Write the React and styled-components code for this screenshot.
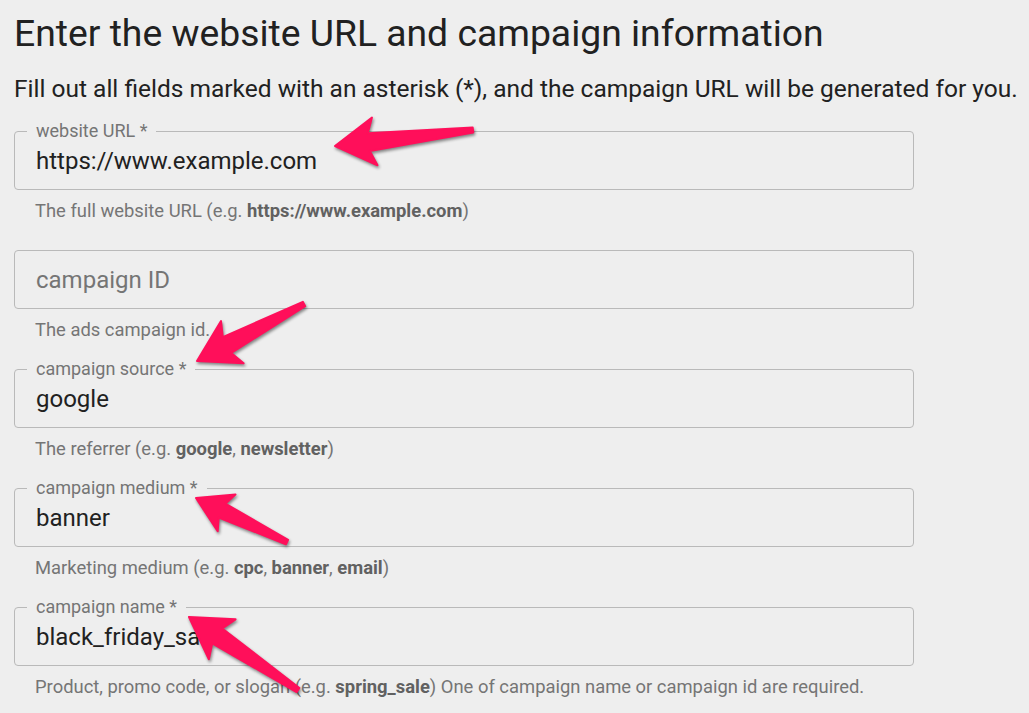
import React from "react";
import styled, { createGlobalStyle } from "styled-components";

const GlobalStyle = createGlobalStyle`
  html, body {
    margin: 0;
    padding: 0;
    background: #eeeeee;
  }
  body {
    font-family: Roboto, "Liberation Sans", Arial, sans-serif;
    color: #212121;
  }
`;

const Page = styled.div`
  position: relative;
  width: 1029px;
  height: 713px;
  overflow: hidden;
  padding: 0 14px;
  box-sizing: border-box;
`;

const Title = styled.h1`
  margin: 11px 0 0 0;
  font-size: 37.3px;
  line-height: 44px;
  font-weight: 400;
  color: #212121;
  white-space: nowrap;
`;

const Intro = styled.p`
  margin: 19px 0 0 0;
  font-size: 24.5px;
  line-height: 29px;
  color: #212121;
  white-space: nowrap;
`;

const Form = styled.div`
  display: flex;
  flex-direction: column;
  margin-top: 19px;
`;

const Field = styled.div`
  display: flex;
  flex-direction: column;
  margin-bottom: 19px;
`;

const Outline = styled.fieldset`
  margin: 0;
  padding: 0 12px;
  width: 900px;
  box-sizing: border-box;
  min-inline-size: 0;
  border: 1px solid #b9b9b9;
  border-radius: 4px;
`;

const Legend = styled.legend`
  padding: ${(p) => (p.$hidden ? "0" : "0 9px")};
  max-width: ${(p) => (p.$hidden ? "0.01px" : "none")};
  visibility: ${(p) => (p.$hidden ? "hidden" : "visible")};
  font-size: 18px;
  line-height: 18px;
  color: #757575;
  white-space: nowrap;
`;

const Input = styled.input`
  display: block;
  width: 100%;
  height: 49px;
  box-sizing: border-box;
  padding: 0 9px 8px 9px;
  border: none;
  outline: none;
  background: transparent;
  font-family: inherit;
  font-size: 24px;
  color: #212121;

  &::placeholder {
    color: #757575;
    opacity: 1;
  }
`;

const Helper = styled.div`
  margin: 10px 0 0 21px;
  font-size: 18.4px;
  line-height: 22px;
  color: #757575;
  white-space: nowrap;

  b {
    font-weight: 700;
    color: #616161;
  }
`;

const Overlay = styled.svg`
  position: absolute;
  top: 0;
  left: 0;
  pointer-events: none;
  filter: drop-shadow(1px 2px 1.5px rgba(0, 0, 0, 0.45));
`;

const fields = [
  {
    label: "website URL *",
    value: "https://www.example.com",
    help: (
      <>
        The full website URL (e.g. <b>https://www.example.com</b>)
      </>
    ),
  },
  {
    label: "campaign ID",
    value: "",
    help: <>The ads campaign id.</>,
  },
  {
    label: "campaign source *",
    value: "google",
    help: (
      <>
        The referrer (e.g. <b>google</b>, <b>newsletter</b>)
      </>
    ),
  },
  {
    label: "campaign medium *",
    value: "banner",
    help: (
      <>
        Marketing medium (e.g. <b>cpc</b>, <b>banner</b>, <b>email</b>)
      </>
    ),
  },
  {
    label: "campaign name *",
    value: "black_friday_sale",
    help: (
      <>
        Product, promo code, or slogan (e.g. <b>spring_sale</b>) One of
        campaign name or campaign id are required.
      </>
    ),
  },
];

// annotation arrows: tip and tail in page pixels, s scales the head
const arrows = [
  { tip: [335, 146], tail: [473, 130], s: 1 },
  { tip: [197, 361], tail: [304, 304], s: 1 },
  { tip: [196, 498], tail: [287, 542], s: 0.85 },
  { tip: [189, 617], tail: [298, 690], s: 1 },
];

function Arrow({ tip, tail, s }) {
  const dx = tail[0] - tip[0];
  const dy = tail[1] - tip[1];
  const len = Math.sqrt(dx * dx + dy * dy);
  const deg = (Math.atan2(dy, dx) * 180) / Math.PI;
  const pts = [
    [0, 0],
    [40 * s, -24 * s],
    [34 * s, -9 * s],
    [len, -2.5],
    [len, 2.5],
    [34 * s, 9 * s],
    [40 * s, 24 * s],
  ]
    .map((p) => p.join(","))
    .join(" ");
  return (
    <g transform={`translate(${tip[0]} ${tip[1]}) rotate(${deg})`}>
      <polygon
        points={pts}
        fill="#ff0f5a"
        stroke="#ff0f5a"
        strokeWidth="2"
        strokeLinejoin="round"
      />
    </g>
  );
}

export default function App() {
  return (
    <Page>
      <GlobalStyle />
      <Title>Enter the website URL and campaign information</Title>
      <Intro>
        Fill out all fields marked with an asterisk (*), and the campaign URL
        will be generated for you.
      </Intro>
      <Form>
        {fields.map((f) => {
          const empty = !f.value;
          return (
            <Field key={f.label}>
              <Outline>
                <Legend $hidden={empty}>{f.label}</Legend>
                <Input
                  readOnly
                  defaultValue={f.value}
                  placeholder={empty ? f.label : undefined}
                />
              </Outline>
              <Helper>{f.help}</Helper>
            </Field>
          );
        })}
      </Form>
      <Overlay width="1029" height="713" viewBox="0 0 1029 713">
        {arrows.map((a, i) => (
          <Arrow key={i} {...a} />
        ))}
      </Overlay>
    </Page>
  );
}
